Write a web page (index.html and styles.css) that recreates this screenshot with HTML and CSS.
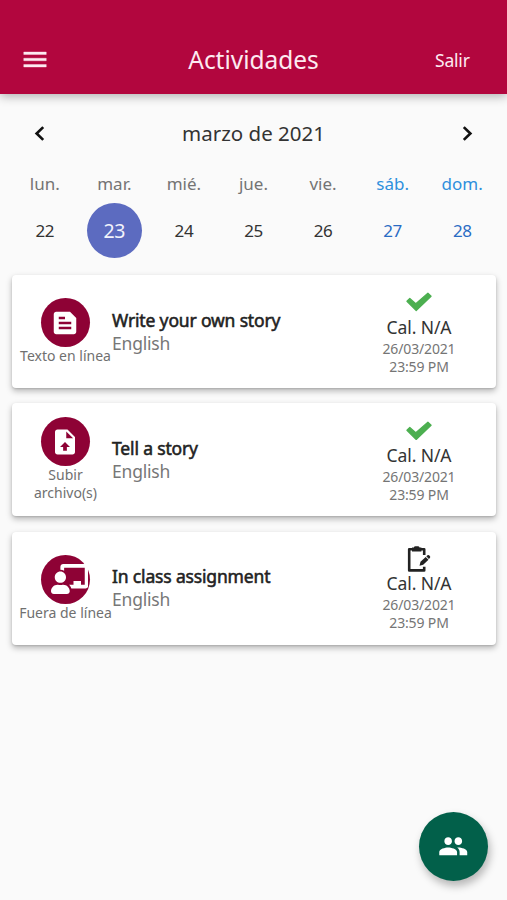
FILE: index.html
```html
<!DOCTYPE html>
<html lang="es">
<head>
<meta charset="utf-8">
<title>Actividades</title>
<link rel="stylesheet" href="styles.css">
</head>
<body>
<header class="topbar">
  <svg class="menu" viewBox="0 0 24 24"><path d="M3 18h18v-2H3v2zm0-5h18v-2H3v2zm0-7v2h18V6H3z"/></svg>
  <h1>Actividades</h1>
  <span class="exit">Salir</span>
</header>
<main>
  <div class="month">
    <svg class="chevron" viewBox="0 0 12 16"><path d="M9.5 2L3.3 8l6.2 6"/></svg>
    <span>marzo de 2021</span>
    <svg class="chevron" viewBox="0 0 12 16"><path d="M2.5 2l6.2 6-6.2 6"/></svg>
  </div>
  <div class="week">
    <div class="day"><span class="name">lun.</span><span class="num">22</span></div>
    <div class="day selected"><span class="name">mar.</span><span class="num">23</span></div>
    <div class="day"><span class="name">mié.</span><span class="num">24</span></div>
    <div class="day"><span class="name">jue.</span><span class="num">25</span></div>
    <div class="day"><span class="name">vie.</span><span class="num">26</span></div>
    <div class="day weekend"><span class="name">sáb.</span><span class="num">27</span></div>
    <div class="day weekend"><span class="name">dom.</span><span class="num">28</span></div>
  </div>
  <section class="list">
    <article class="card">
      <div class="kind">
        <div class="disc"><svg viewBox="0 0 24 24"><path d="M16 3H5c-1.1 0-2 .9-2 2v14c0 1.1.9 2 2 2h14c1.1 0 2-.9 2-2V8l-5-5zM7 7h5v2H7V7zm10 10H7v-2h10v2zm0-4H7v-2h10v2z"/></svg></div>
        <span>Texto en línea</span>
      </div>
      <div class="info"><h2>Write your own story</h2><p>English</p></div>
      <div class="status">
        <svg class="check" viewBox="0 0 26 19.5"><path d="M3.8 6.5L9.8 11.8 21.9 1.1l3.2 3.1L10.2 18.5.9 9.3z"/></svg>
        <strong>Cal. N/A</strong><span>26/03/2021</span><span>23:59 PM</span>
      </div>
    </article>
    <article class="card">
      <div class="kind">
        <div class="disc"><svg viewBox="0 0 24 24"><path d="M14,2H6C4.89,2 4,2.89 4,4V20C4,21.11 4.89,22 6,22H18C19.11,22 20,21.11 20,20V8L14,2M13.5,16V19H10.5V16H8L12,12L16,16H13.5M13,9V3.5L18.5,9H13Z"/></svg></div>
        <span>Subir<br>archivo(s)</span>
      </div>
      <div class="info"><h2>Tell a story</h2><p>English</p></div>
      <div class="status">
        <svg class="check" viewBox="0 0 26 19.5"><path d="M3.8 6.5L9.8 11.8 21.9 1.1l3.2 3.1L10.2 18.5.9 9.3z"/></svg>
        <strong>Cal. N/A</strong><span>26/03/2021</span><span>23:59 PM</span>
      </div>
    </article>
    <article class="card">
      <div class="kind">
        <div class="disc wide"><svg viewBox="0 0 640 512"><path d="M208 352c-2.39 0-4.78.35-7.06 1.09C187.98 357.3 174.35 360 160 360c-14.35 0-27.98-2.7-40.95-6.91-2.28-.74-4.66-1.09-7.05-1.09C49.94 352-.33 402.48 0 464.62.14 490.88 21.73 512 48 512h224c26.27 0 47.86-21.12 48-47.38.33-62.14-49.94-112.62-112-112.62zm-48-32c53.02 0 96-42.98 96-96s-42.98-96-96-96-96 42.98-96 96 42.98 96 96 96zM592 0H208c-26.47 0-48 22.25-48 49.59V96c23.42 0 45.1 6.78 64 17.8V64h352v288h-64v-64H384v64h-76.24c19.1 16.69 33.12 38.73 39.69 64H592c26.47 0 48-22.25 48-49.59V49.59C640 22.25 618.47 0 592 0z"/></svg></div>
        <span>Fuera de línea</span>
      </div>
      <div class="info"><h2>In class assignment</h2><p>English</p></div>
      <div class="status">
        <svg class="clip" viewBox="0 0 24 26"><path class="board" d="M17.2 9V3.2H2.2v21.2h15v-3.6"/><path d="M5 1.6h1.8Q7.2.3 8.4.3h2.6q1.2 0 1.6 1.3h1.8v4H5zM12.5 19.8l1-4 5.2-4.9 2.8 2.9-5.3 4.9zM19.3 10.3l1.2-1.1q.8-.6 1.6.1l.9 1q.6.9-.1 1.6l-1 1z"/></svg>
        <strong>Cal. N/A</strong><span>26/03/2021</span><span>23:59 PM</span>
      </div>
    </article>
  </section>
</main>
<button class="fab" aria-label="Personas"><svg viewBox="0 0 24 24"><path d="M16 11c1.66 0 2.99-1.34 2.99-3S17.66 5 16 5c-1.66 0-3 1.34-3 3s1.34 3 3 3zm-8 0c1.66 0 2.99-1.34 2.99-3S9.66 5 8 5C6.34 5 5 6.34 5 8s1.34 3 3 3zm0 2c-2.33 0-7 1.17-7 3.5V19h14v-2.5c0-2.33-4.67-3.5-7-3.5zm8 0c-.29 0-.62.02-.97.05 1.16.84 1.97 1.97 1.97 3.45V19h6v-2.5c0-2.33-4.67-3.5-7-3.5z"/></svg></button>
</body>
</html>
```
FILE: styles.css
```css
* { box-sizing: border-box; margin: 0; padding: 0; }
body {
  height: 900px;
  overflow: hidden;
  background: #fafafa;
  color: #333;
  font-family: "Noto Sans", sans-serif;
}
svg { display: block; fill: currentColor; }
.topbar {
  display: grid;
  grid-template-columns: 110px 1fr 110px;
  align-items: center;
  height: 94px;
  padding-top: 25px;
  background: #b2063e;
  color: #fdeaf1;
  box-shadow: 0 2px 10px rgba(0, 0, 0, .32);
}
.menu { width: 30px; height: 31px; margin-left: 20px; stroke: currentColor; stroke-width: .3; }
.topbar h1 { font-size: 24.5px; font-weight: 400; line-height: 32px; letter-spacing: -.03px; text-align: center; }
.exit { padding-left: 38px; font-size: 17.5px; line-height: 24px; letter-spacing: -.2px; }
.month {
  display: flex;
  justify-content: space-between;
  align-items: center;
  height: 78px;
  padding: 0 33px;
  font-size: 20.5px;
  line-height: 28px;
}
.chevron { width: 13px; height: 17px; }
.chevron path { fill: none; stroke: #111; stroke-width: 2.5; }
.week { display: grid; grid-template-columns: repeat(7, 1fr); padding: 0 10px; height: 103px; }
.day { display: flex; flex-direction: column; align-items: center; }
.name { color: #747474; font-size: 17px; line-height: 24px; }
.num {
  width: 55px;
  height: 55px;
  margin-top: 6.5px;
  border-radius: 50%;
  font-size: 17px;
  line-height: 55px;
  letter-spacing: -.4px;
  text-align: center;
}
.selected .num { background: #5c6bc0; color: #f2f3fb; font-size: 19.5px; }
.weekend .name { color: #2e8fdd; }
.weekend .num { color: #2a6cc4; }
.list { display: flex; flex-direction: column; gap: 15.3px; padding: 0 11px 0 12px; }
.card {
  display: grid;
  grid-template-columns: 91px 1fr 120px;
  align-items: center;
  height: 113px;
  padding: 0 17px 0 8px;
  border-radius: 4px;
  background: #fff;
  box-shadow: 0 3px 6px rgba(0, 0, 0, .28), 0 1px 2px rgba(0, 0, 0, .12);
}
.kind {
  display: flex;
  flex-direction: column;
  align-items: center;
  color: #707070;
  font-size: 14px;
  line-height: 18px;
  text-align: center;
  white-space: nowrap;
}
.disc {
  display: flex;
  align-items: center;
  justify-content: center;
  width: 49px;
  height: 49px;
  border-radius: 50%;
  background: #8e0235;
  color: #fff;
}
.disc svg { flex: none; width: 30px; height: 30px; margin-left: -1px; }
.disc.wide { justify-content: flex-start; padding-left: 10.5px; }
.wide svg { width: 37.5px; }
.info { padding-left: 1px; line-height: 23px; }
.info h2 { color: #222; font-size: 17.5px; font-weight: 400; letter-spacing: -.16px; -webkit-text-stroke: .55px #222; white-space: nowrap; }
.info p { color: #777; font-size: 17.5px; letter-spacing: -.2px; }
.status {
  display: flex;
  flex-direction: column;
  align-items: center;
  padding-top: 2px;
  color: #757575;
  font-size: 14px;
  line-height: 18px;
  letter-spacing: -.15px;
}
.status strong { color: #333; font-size: 17.5px; font-weight: 400; line-height: 25px; letter-spacing: -.1px; }
.check { width: 26px; height: 19.5px; margin: 3px 0; color: #4caf50; stroke: currentColor; stroke-width: 1.2; stroke-linejoin: round; }
.clip { width: 24px; height: 26px; margin-bottom: -.5px; color: #222; }
.board { fill: none; stroke: currentColor; stroke-width: 2.6; stroke-linejoin: round; }
.fab {
  position: fixed;
  right: 19.5px;
  bottom: 19.5px;
  display: grid;
  place-items: center;
  width: 69px;
  height: 69px;
  border: 0;
  border-radius: 50%;
  background: #02604a;
  color: #fff;
  box-shadow: 2px 5px 9px rgba(0, 0, 0, .28);
}
.fab svg { width: 30.5px; height: 30.5px; }
```
